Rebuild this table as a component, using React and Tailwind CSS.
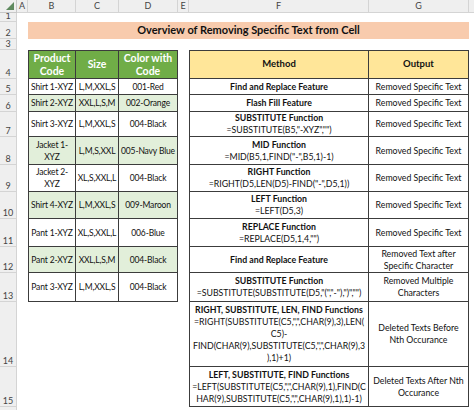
import clsx from 'clsx';

const font = { fontFamily: 'Lato, "Liberation Sans", sans-serif' };

const leftRows = [
  { h: 'h-[16px]', cells: ['Shirt 1-XYZ', 'L,M,XXL,S', '001-Red'] },
  { h: 'h-[17px]', green: true, cells: ['Shirt 2-XYZ', 'XXL,L,S,M', '002-Orange'] },
  { h: 'h-[25px]', cells: ['Shirt 3-XYZ', 'L,M,XXL,S', '004-Black'] },
  { h: 'h-[28px]', green: true, cells: [['Jacket 1-', 'XYZ'], 'L,M,S,XXL', '005-Navy Blue'] },
  { h: 'h-[27px]', cells: [['Jacket 2-', 'XYZ'], 'XL,S,XXL,L', '004-Black'] },
  { h: 'h-[27px]', green: true, cells: ['Shirt 4-XYZ', 'L,M,XXL,S', '009-Maroon'] },
  { h: 'h-[28px]', cells: ['Pant 1-XYZ', 'XL,S,XXL,L', '006-Blue'] },
  { h: 'h-[26px]', green: true, cells: ['Pant 2-XYZ', 'XXL,L,S,M', '004-Black'] },
  { h: 'h-[29px]', cells: ['Pant 3-XYZ', 'L,M,XXL,S', '004-Black'] },
];

const rightRows = [
  { method: ['Find and Replace Feature'], out: ['Removed Specific Text'] },
  { method: ['Flash Fill Feature'], out: ['Removed Specific Text'] },
  { method: ['SUBSTITUTE Function', '=SUBSTITUTE(B5,"-XYZ","")'], out: ['Removed Specific Text'] },
  { method: ['MID Function', '=MID(B5,1,FIND("-",B5,1)-1)'], out: ['Removed Specific Text'] },
  { method: ['RIGHT Function', '=RIGHT(D5,LEN(D5)-FIND("-",D5,1))'], out: ['Removed Specific Text'] },
  { method: ['LEFT Function', '=LEFT(D5,3)'], out: ['Removed Specific Text'] },
  { method: ['REPLACE Function', '=REPLACE(D5,1,4,"")'], out: ['Removed Specific Text'] },
  { method: ['Find and Replace Feature'], out: ['Removed Text after', 'Specific Character'] },
  {
    method: ['SUBSTITUTE Function', '=SUBSTITUTE(SUBSTITUTE(D5,"(","-"),")","")'],
    out: ['Removed Multiple', 'Characters'],
  },
];

const bottomRows = [
  {
    n: 14,
    h: 'h-[65px]',
    method: [
      'RIGHT, SUBSTITUTE, LEN, FIND Functions',
      '=RIGHT(SUBSTITUTE(C5,",",CHAR(9),3),LEN(',
      'C5)-',
      'FIND(CHAR(9),SUBSTITUTE(C5,",",CHAR(9),3',
      '),1)+1)',
    ],
    out: ['Deleted Texts Before', 'Nth Occurance'],
  },
  {
    n: 15,
    h: 'h-[40px]',
    method: [
      'LEFT, SUBSTITUTE, FIND Functions',
      '=LEFT(SUBSTITUTE(C5,",",CHAR(9),1),FIND(C',
      'HAR(9),SUBSTITUTE(C5,",",CHAR(9),1),1)-1)',
    ],
    out: ['Deleted Texts After Nth', 'Occurance'],
  },
];

function RowNum({ n }) {
  return (
    <div className="w-[17px] shrink-0 h-full bg-[#efefef] border-r border-b border-[#d4d4d4] flex items-end justify-center text-[9px] leading-none pb-[1px] text-[#444]">
      {n}
    </div>
  );
}

function Lines({ lines, boldFirst }) {
  return lines.map((l, i) => (
    <div key={i} className={clsx('whitespace-nowrap leading-[12px]', boldFirst && i === 0 && 'font-bold')}>
      {l}
    </div>
  ));
}

function Cell({ w, className, children }) {
  return (
    <div
      className={clsx(
        'shrink-0 h-full flex flex-col items-center justify-center text-center overflow-hidden border-r border-b border-[#3c3c3c]',
        w,
        className
      )}
    >
      {children}
    </div>
  );
}

function Gap({ w }) {
  return <div className={clsx('shrink-0 h-full', w)} />;
}

export default function App() {
  const cols = [
    ['A', 'w-[11px]'],
    ['B', 'w-[48px]'],
    ['C', 'w-[43px]'],
    ['D', 'w-[59px]'],
    ['E', 'w-[11px]'],
    ['F', 'w-[180px]'],
    ['G', 'w-[100px]'],
  ];

  return (
    <div className="w-[474px] h-[410px] overflow-hidden bg-white text-[8.75px] text-[#111]" style={font}>
      {/* column headers */}
      <div className="flex h-[13px]">
        <div className="relative w-[17px] shrink-0 h-full bg-[#efefef] border-r border-b border-[#c8c8c8]">
          <svg className="absolute right-[2px] bottom-[2px]" width="8" height="8" viewBox="0 0 8 8">
            <polygon points="8,0 8,8 0,8" fill="#5f8a5f" />
          </svg>
        </div>
        {cols.map(([c, w]) => (
          <div
            key={c}
            className={clsx(
              'shrink-0 h-full bg-[#efefef] border-r border-b border-[#d4d4d4] flex items-center justify-center text-[9px] text-[#444]',
              w
            )}
          >
            {c}
          </div>
        ))}
        <div className="flex-1 h-full bg-[#efefef] border-b border-[#d4d4d4]" />
      </div>

      {/* row 1 */}
      <div className="flex h-[9px]">
        <RowNum n={1} />
      </div>

      {/* row 2: title */}
      <div className="flex h-[17px]">
        <RowNum n={2} />
        <Gap w="w-[11px]" />
        <div className="w-[441px] shrink-0 h-full bg-[#f8cbad] flex items-center justify-center font-bold text-[11px] text-[#111]">
          Overview of Removing Specific Text from Cell
        </div>
      </div>

      {/* row 3 */}
      <div className="flex h-[11px]">
        <RowNum n={3} />
      </div>

      {/* row 4: headers */}
      <div className="flex h-[29px]">
        <RowNum n={4} />
        <Gap w="w-[11px]" />
        <Cell w="w-[48px]" className="border-l border-t bg-[#70ad47] text-white font-bold text-[10.5px]">
          <div className="leading-[13px]">Product</div>
          <div className="leading-[13px]">Code</div>
        </Cell>
        <Cell w="w-[43px]" className="border-t bg-[#70ad47] text-white font-bold text-[10.5px]">
          Size
        </Cell>
        <Cell w="w-[59px]" className="border-t bg-[#70ad47] text-white font-bold text-[10.5px]">
          <div className="leading-[13px]">Color with</div>
          <div className="leading-[13px]">Code</div>
        </Cell>
        <Gap w="w-[11px]" />
        <Cell w="w-[180px]" className="border-l border-t bg-[#ffe699] font-bold text-[9.5px]">
          Method
        </Cell>
        <Cell w="w-[100px]" className="border-t bg-[#ffe699] font-bold text-[9.5px]">
          Output
        </Cell>
      </div>

      {/* rows 5 - 13 */}
      {leftRows.map((r, i) => {
        const rr = rightRows[i];
        const bg = r.green ? 'bg-[#e2efda]' : 'bg-white';
        return (
          <div key={i} className={clsx('flex', r.h)}>
            <RowNum n={i + 5} />
            <Gap w="w-[11px]" />
            {r.cells.map((c, j) => (
              <Cell
                key={j}
                w={j === 0 ? 'w-[48px]' : j === 1 ? 'w-[43px]' : 'w-[59px]'}
                className={clsx(bg, 'text-[8.5px] tracking-[-0.15px]', j === 0 && 'border-l')}
              >
                <Lines lines={Array.isArray(c) ? c : [c]} />
              </Cell>
            ))}
            <Gap w="w-[11px]" />
            <Cell w="w-[180px]" className="border-l">
              <Lines lines={rr.method} boldFirst />
            </Cell>
            <Cell w="w-[100px]">
              <Lines lines={rr.out} />
            </Cell>
          </div>
        );
      })}

      {/* rows 14 - 15 */}
      {bottomRows.map((r) => (
        <div key={r.n} className={clsx('flex', r.h)}>
          <RowNum n={r.n} />
          <Gap w="w-[161px]" />
          <Gap w="w-[11px]" />
          <Cell w="w-[180px]" className="border-l">
            <Lines lines={r.method} boldFirst />
          </Cell>
          <Cell w="w-[100px]">
            <Lines lines={r.out} />
          </Cell>
        </div>
      ))}

      {/* row 16, cut by the window */}
      <div className="flex h-[20px]">
        <div className="w-[17px] shrink-0 h-full bg-[#efefef] border-r border-[#d4d4d4]" />
      </div>
    </div>
  );
}
